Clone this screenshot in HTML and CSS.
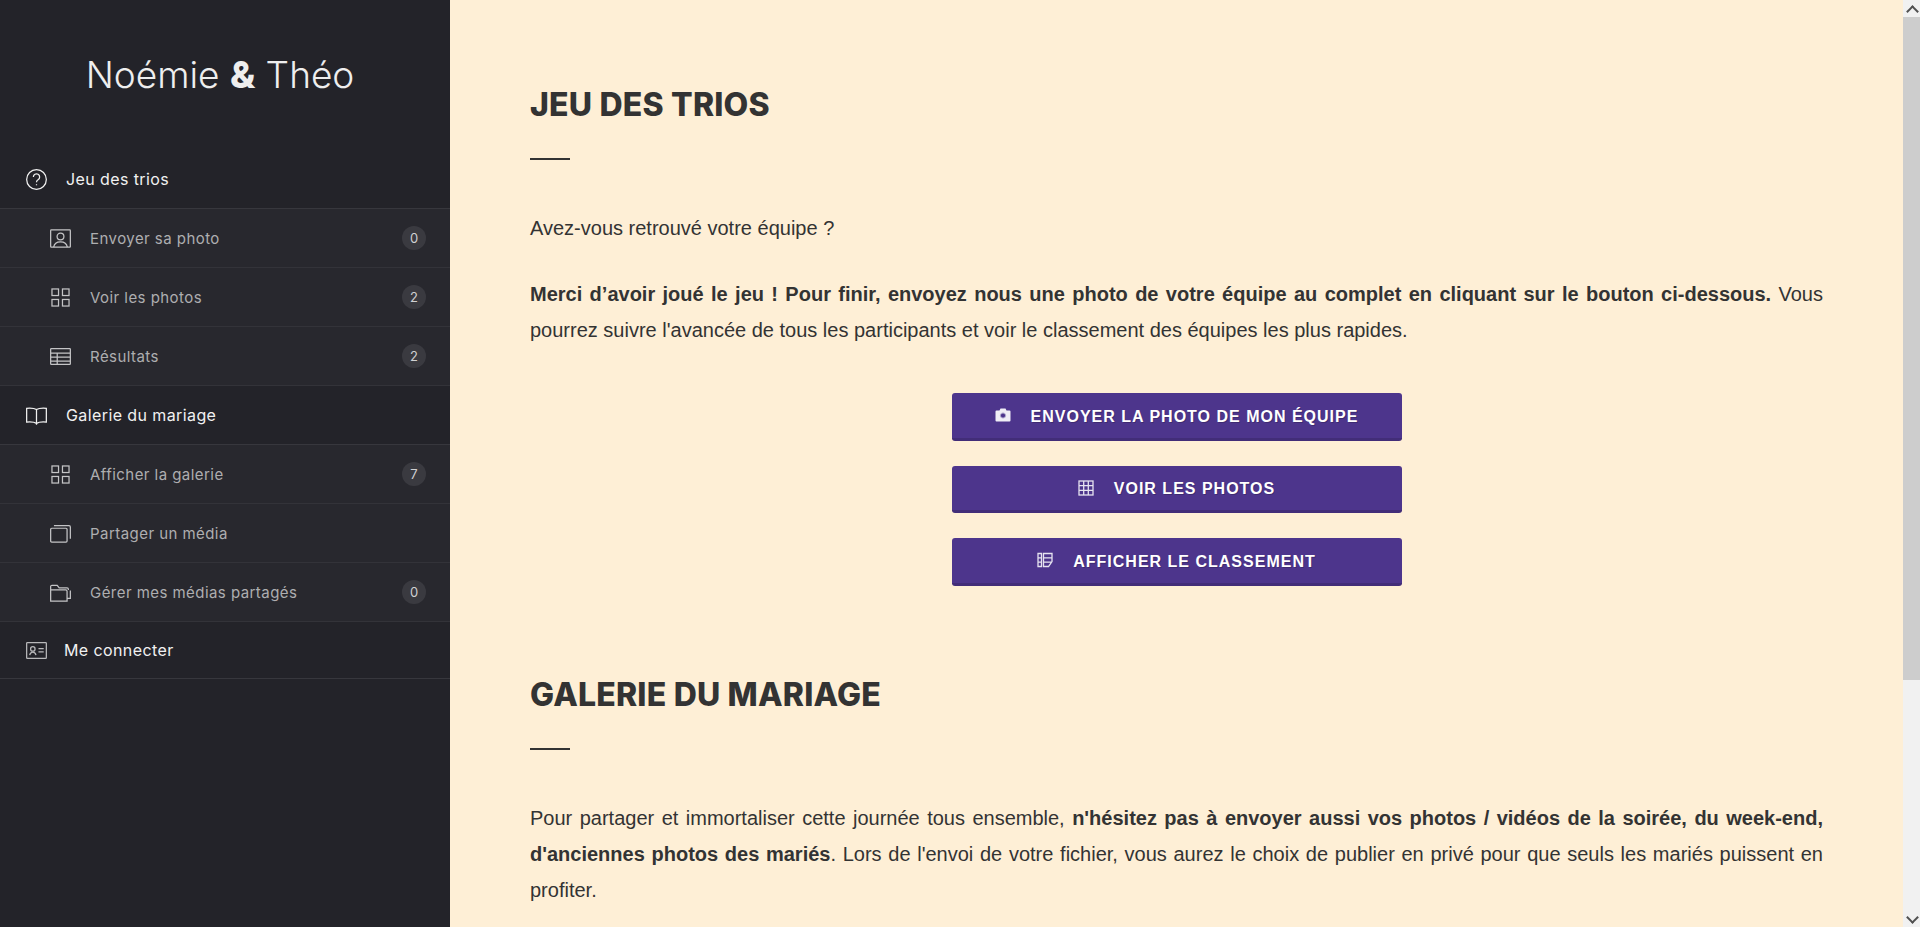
FILE: index.html
```html
<!DOCTYPE html>
<html lang="fr">
<head>
  <meta charset="UTF-8" />
  <meta name="viewport" content="width=device-width, initial-scale=1.0" />
  <title>Noémie &amp; Théo</title>
  <link rel="stylesheet" href="styles.css">
</head>
<body>
  <aside class="sidebar">
    <h1 class="logo">Noémie <b>&amp;</b> Théo</h1>
    <nav class="menu">
      <a class="menu-item">
        <svg class="ico" viewBox="0 0 16 16"><circle cx="8" cy="8" r="7.500"/><path d="M5.600 6.100a2.400 2.400 0 1 1 3.600 2.100c-.8.5-1.200.9-1.200 1.800"/><path d="M8 11.600v.8"/></svg>
        Jeu des trios
      </a>
      <a class="menu-item sub">
        <svg class="ico" viewBox="0 0 16 16"><rect x=".5" y="1.500" width="15" height="13" rx=".5"/><circle cx="8" cy="6.500" r="2.600"/><path d="M2.800 14.500c.4-2.600 2.400-4 5.200-4s4.800 1.400 5.200 4"/></svg>
        Envoyer sa photo <span class="count">0</span>
      </a>
      <a class="menu-item sub">
        <svg class="ico" viewBox="0 0 16 16"><rect x="1.500" y="1.500" width="5" height="5"/><rect x="9.500" y="1.500" width="5" height="5"/><rect x="1.500" y="9.500" width="5" height="5"/><rect x="9.500" y="9.500" width="5" height="5"/></svg>
        Voir les photos <span class="count">2</span>
      </a>
      <a class="menu-item sub">
        <svg class="ico" viewBox="0 0 16 16"><rect x=".5" y="2" width="15" height="12" rx=".5"/><path d="M.5 5.500h15M.5 8.500h15M.5 11.500h15M5.500 5.500V14"/></svg>
        Résultats <span class="count">2</span>
      </a>
      <a class="menu-item">
        <svg class="ico" viewBox="0 0 16 16"><path d="M8 3.500C6.500 2.500 3 2.300.5 2.500v10.500c2.500-.2 6 0 7.500 1 1.500-1 5-1.200 7.500-1V2.500C13 2.300 9.500 2.500 8 3.500zM8 3.500V15"/></svg>
        Galerie du mariage
      </a>
      <a class="menu-item sub">
        <svg class="ico" viewBox="0 0 16 16"><rect x="1.500" y="1.500" width="5" height="5"/><rect x="9.500" y="1.500" width="5" height="5"/><rect x="1.500" y="9.500" width="5" height="5"/><rect x="9.500" y="9.500" width="5" height="5"/></svg>
        Afficher la galerie <span class="count">7</span>
      </a>
      <a class="menu-item sub">
        <svg class="ico" viewBox="0 0 16 16"><rect x=".5" y="4" width="12.500" height="10.500" rx=".8"/><path d="M3 2h11.500a1 1 0 0 1 1 1v9"/></svg>
        Partager un média
      </a>
      <a class="menu-item sub">
        <svg class="ico" viewBox="0 0 16 16"><path d="M.5 14V3.500a1 1 0 0 1 1-1h4l1.500 2h6a1 1 0 0 1 1 1V6M.5 14.500h12.500V7a1 1 0 0 0-1-1H.5zM13 12.500h2.500V6.500"/></svg>
        Gérer mes médias partagés <span class="count">0</span>
      </a>
      <a class="menu-item login">
        <svg class="ico" viewBox="0 0 16 16"><rect x=".5" y="2" width="15" height="12" rx=".5"/><circle cx="5.200" cy="6.800" r="1.700"/><path d="M2.800 11.500c.3-1.600 1.200-2.300 2.400-2.300s2.100.7 2.400 2.300M9.500 6.500h4M9.500 9h4"/></svg>
        Me connecter
      </a>
    </nav>
  </aside>

  <main class="content">
    <section class="block">
      <h2>Jeu des trios</h2>
      <p>Avez-vous retrouvé votre équipe ?</p>
      <p class="just"><strong>Merci d’avoir joué le jeu ! Pour finir, envoyez nous une photo de votre équipe au complet en cliquant sur le bouton ci-dessous.</strong> Vous pourrez suivre l'avancée de tous les participants et voir le classement des équipes les plus rapides.</p>
      <div class="actions">
        <a class="btn">
          <svg class="btn-ico" viewBox="0 0 16 16"><path d="M1.500 3.500h3l1-2h5l1 2h3a1 1 0 0 1 1 1v9a1 1 0 0 1-1 1h-13a1 1 0 0 1-1-1v-9a1 1 0 0 1 1-1z"/><circle class="cut" cx="8" cy="8.500" r="2.600"/></svg>
          Envoyer la photo de mon équipe
        </a>
        <a class="btn">
          <svg class="btn-ico line" viewBox="0 0 16 16"><rect x="1" y="1" width="14" height="14"/><path d="M1 5.700h14M1 10.300h14M5.700 1v14M10.300 1v14"/></svg>
          Voir les photos
        </a>
        <a class="btn">
          <svg class="btn-ico line" viewBox="0 0 16 16"><path d="M1 1.500h3.500v13H1zM1 5.800h3.500M1 10.200h3.500M6.500 1.500h8.500v8l-3.500 5h-5zM6.500 5.800h8.500M6.500 10.200h8"/></svg>
          Afficher le classement
        </a>
      </div>
    </section>
    <section class="block">
      <h2>Galerie du mariage</h2>
      <p class="just">Pour partager et immortaliser cette journée tous ensemble, <strong>n'hésitez pas à envoyer aussi vos photos / vidéos de la soirée, du week-end, d'anciennes photos des mariés</strong>. Lors de l'envoi de votre fichier, vous aurez le choix de publier en privé pour que seuls les mariés puissent en profiter.</p>
    </section>
  </main>

  <div class="scrollbar">
    <span class="arrow up"></span>
    <span class="thumb"></span>
    <span class="arrow down"></span>
  </div>
</body>
</html>
```

FILE: styles.css
```css
* {
  box-sizing: border-box;
}
html, body {
  height: 100%;
}
body {
  margin: 0;
  display: flex;
  overflow: hidden;
  font-family: "Liberation Sans", Arial, sans-serif;
  background-color: #feefd6;
  color: #333;
}

/* sidebar */
.sidebar {
  width: 450px;
  flex: none;
  background: #232329;
  font-family: Inter, "Noto Sans", sans-serif;
}
.logo {
  margin: 0;
  padding: 50px 10px 0 0;
  height: 150px;
  text-align: center;
  font-size: 37px;
  line-height: 50px;
  font-weight: 300;
  color: #eee;
}
.logo b {
  font-weight: 800;
}
.menu-item {
  display: flex;
  align-items: center;
  height: 59px;
  padding: 0 24px 0 26px;
  border-bottom: 1px solid #37373d;
  font-size: 16px;
  letter-spacing: .4px;
  color: #f1f1f1;
  gap: 19px;
}
.menu-item.sub {
  background: #28282e;
  padding-left: 50px;
  font-size: 15px;
  letter-spacing: .45px;
  color: #aeaeb0;
  border-bottom-color: #333339;
}
.menu-item.login {
  height: 57px;
  gap: 17px;
}
.ico {
  width: 21px;
  height: 21px;
  flex: none;
  fill: none;
  stroke: currentColor;
  stroke-width: .95;
}
.sub .ico {
  stroke: #c4c4c6;
}
.login .ico {
  stroke: #b8b8ba;
}
.count {
  margin-left: auto;
  width: 24px;
  height: 24px;
  border-radius: 50%;
  background: #3a3a40;
  color: #d0d0d2;
  font-size: 13px;
  letter-spacing: 0;
  line-height: 24px;
  text-align: center;
}

/* main column */
.content {
  flex: 1;
  min-width: 0;
  padding: 0 80px;
  overflow: hidden;
  font-size: 20px;
  line-height: 36px;
}
.block {
  padding-top: 80px;
}
.block + .block {
  padding-top: 84.5px;
}
h2 {
  margin: 0 0 50px;
  padding-bottom: 30px;
  position: relative;
  font-family: Inter, "Noto Sans", sans-serif;
  font-size: 32px;
  line-height: 50px;
  font-weight: 800;
  letter-spacing: .2px;
  text-transform: uppercase;
  color: #333;
}
h2::after {
  content: "";
  position: absolute;
  left: 0;
  bottom: 0;
  width: 40px;
  height: 2px;
  background: #333;
}
p {
  margin: 0 0 30px;
}
.just {
  text-align: justify;
}

/* buttons */
.actions {
  display: flex;
  flex-direction: column;
  align-items: center;
  gap: 25px;
  padding-top: 15px;
}
.btn {
  display: flex;
  align-items: center;
  justify-content: center;
  gap: 20px;
  width: 450px;
  height: 47.5px;
  padding-top: 3px;
  background: #4d358c;
  border-bottom: 3px solid #422d78;
  border-radius: 3px;
  color: #fff;
  font-size: 16px;
  line-height: 20px;
  font-weight: 700;
  letter-spacing: 1px;
  text-transform: uppercase;
  text-shadow: 1px 1px 0 rgba(0,0,0,.2);
}
.btn-ico {
  width: 16px;
  height: 16px;
  margin-top: -3px;
  fill: #f0eef6;
}
.btn-ico .cut {
  fill: #4d358c;
  stroke: #b9b2d4;
  stroke-width: 1;
}
.btn-ico.line {
  fill: none;
  stroke: #e6e3f0;
  stroke-width: 1.300;
}

/* scrollbar */
.scrollbar {
  width: 17px;
  flex: none;
  display: flex;
  flex-direction: column;
  background: #f1f1f1;
}
.arrow {
  height: 17px;
  flex: none;
  position: relative;
}
.arrow::before {
  content: "";
  position: absolute;
  left: 5px;
  width: 7px;
  height: 7px;
  border-left: 2px solid #505050;
  border-top: 2px solid #505050;
}
.arrow.up::before {
  top: 7px;
  transform: rotate(45deg);
}
.arrow.down::before {
  top: 3px;
  transform: rotate(225deg);
}
.thumb {
  height: 663px;
  flex: none;
  background: #cdcdcd;
}
.arrow.down {
  margin-top: auto;
}
```
